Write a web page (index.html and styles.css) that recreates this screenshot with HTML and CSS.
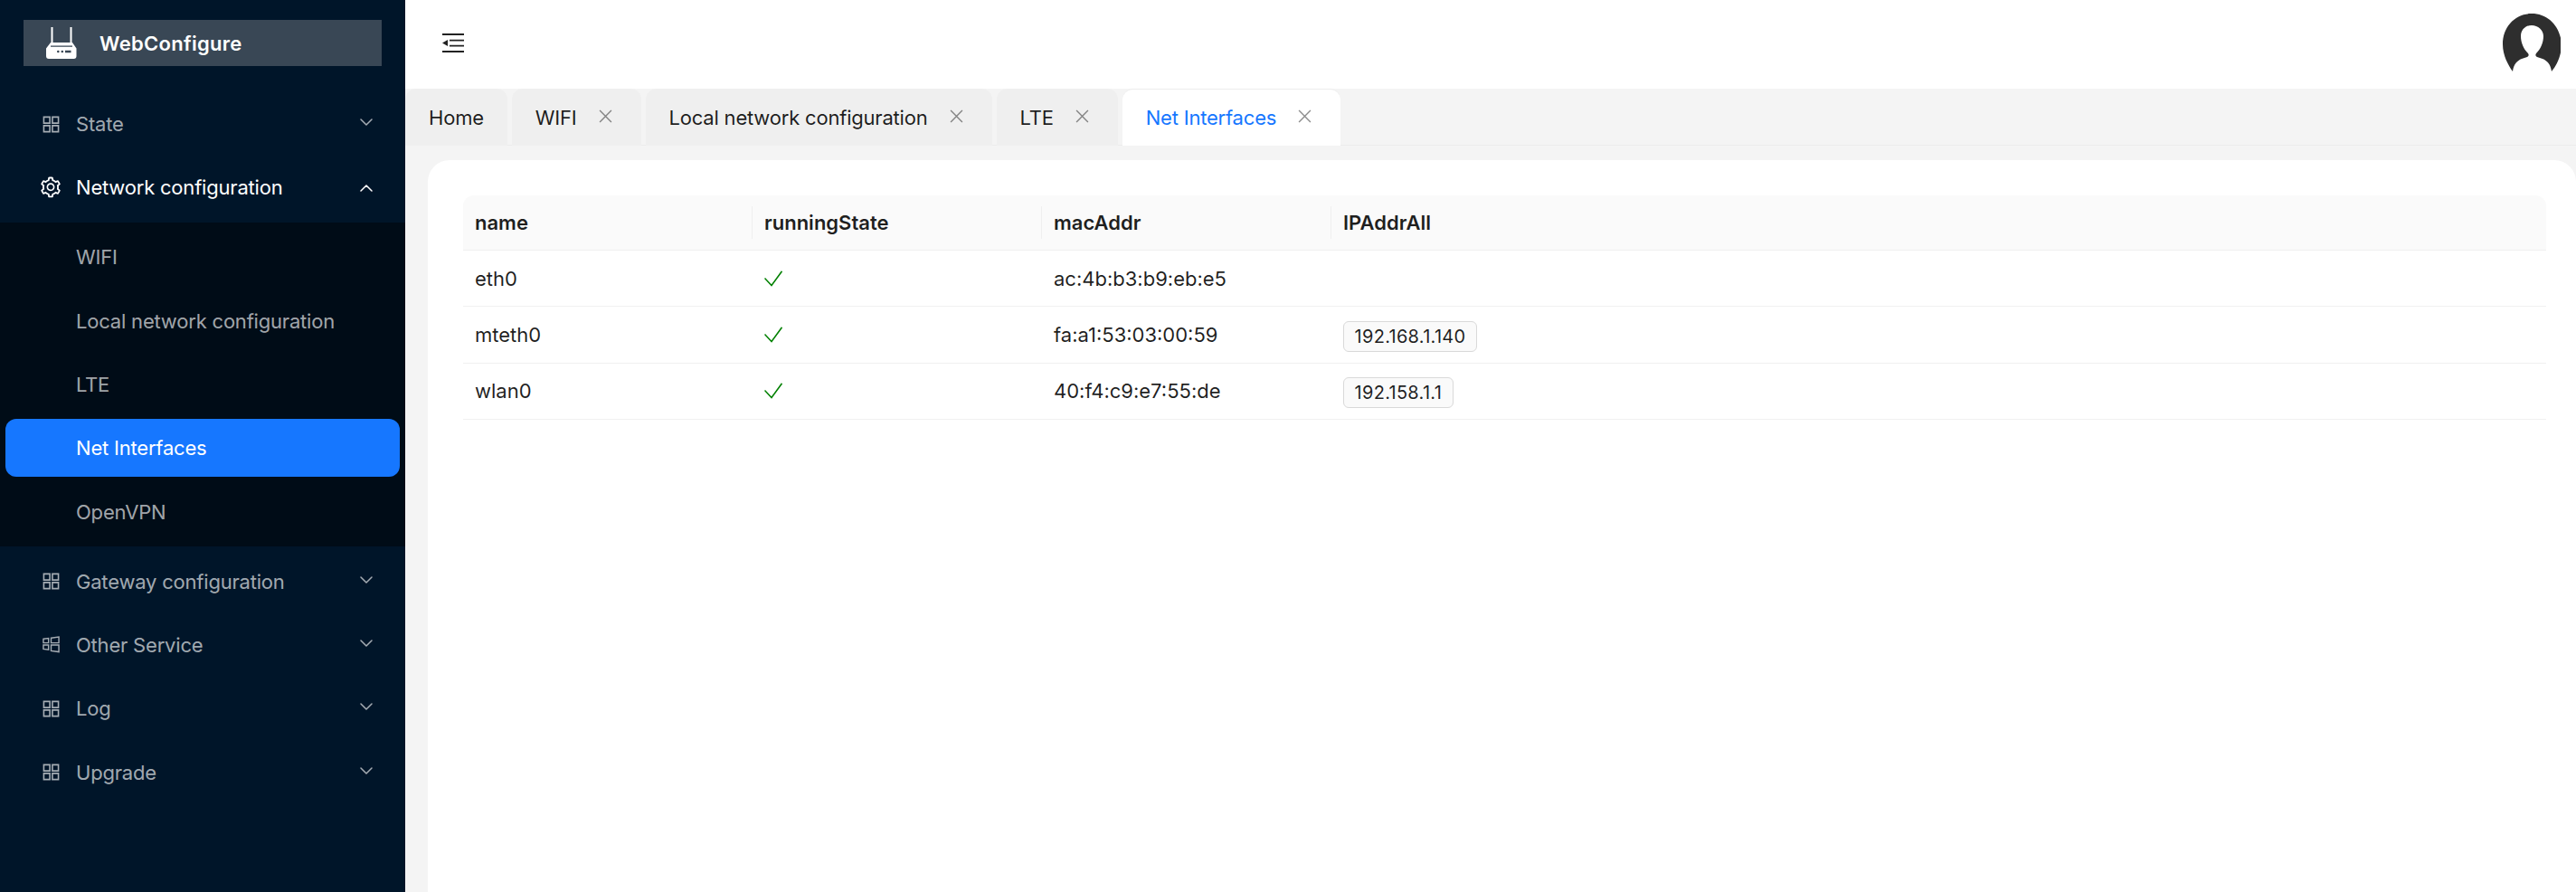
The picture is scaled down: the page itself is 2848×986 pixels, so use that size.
FILE: index.html
```html
<!DOCTYPE html>
<html lang="en">
<head>
  <meta charset="UTF-8">
  <title>WebConfigure - Net Interfaces</title>
  <link rel="stylesheet" href="styles.css">
</head>
<body>
  <svg class="sprite" xmlns="http://www.w3.org/2000/svg">
    <symbol id="icon-app" viewBox="0 0 20 20">
      <path fill="none" stroke="currentColor" stroke-width="1.7" d="M1.5 1.5h7v7h-7zM11.500 1.500h7v7h-7zM1.500 11.500h7v7h-7zM11.500 11.500h7v7h-7z"/>
    </symbol>
    <symbol id="icon-windows" viewBox="0 0 20 20">
      <path fill="none" stroke="currentColor" stroke-width="1.500" d="M1 3.500l6-.8v5.300H1zM10 2.300l9-1.300v7h-9zM1 10.500h6V16l-6-.8zM10 10.500h9v8l-9-1.300z"/>
    </symbol>
    <symbol id="icon-gear" viewBox="0 0 1024 1024">
      <path fill="currentColor" d="M924.8 625.7l-65.5-56c3.1-19 4.7-38.4 4.7-57.8s-1.6-38.8-4.7-57.8l65.5-56a32.03 32.03 0 0 0 9.3-35.2l-.9-2.6a443.74 443.74 0 0 0-79.7-137.9l-1.8-2.1a32.12 32.12 0 0 0-35.1-9.5l-81.3 28.9c-30-24.6-63.5-44-99.7-57.6l-15.7-85a32.05 32.05 0 0 0-25.8-25.7l-2.7-.5c-52.1-9.4-106.9-9.4-159 0l-2.7.5a32.05 32.05 0 0 0-25.8 25.7l-15.8 85.4a351.86 351.86 0 0 0-99 57.4l-81.9-29.1a32 32 0 0 0-35.1 9.5l-1.8 2.1a446.02 446.02 0 0 0-79.7 137.9l-.9 2.6c-4.5 12.5-.8 26.5 9.3 35.2l66.3 56.6c-3.1 18.8-4.6 38-4.6 57.1 0 19.2 1.5 38.4 4.6 57.1L99 625.5a32.03 32.03 0 0 0-9.3 35.2l.9 2.6c18.1 50.4 44.9 96.9 79.7 137.9l1.8 2.1a32.12 32.12 0 0 0 35.1 9.5l81.9-29.1c29.8 24.5 63.1 43.9 99 57.4l15.8 85.4a32.05 32.05 0 0 0 25.8 25.7l2.7.5a449.4 449.4 0 0 0 159 0l2.7-.5a32.05 32.05 0 0 0 25.8-25.7l15.7-85a350 350 0 0 0 99.7-57.6l81.3 28.9a32 32 0 0 0 35.1-9.5l1.8-2.1c34.8-41.1 61.6-87.5 79.7-137.9l.9-2.6c4.5-12.3.8-26.3-9.3-35zM788.3 465.9c2.5 15.1 3.8 30.6 3.8 46.1s-1.3 31-3.8 46.1l-6.6 40.1 74.7 63.9a370.03 370.03 0 0 1-42.6 73.6L721 702.8l-31.4 25.8c-23.9 19.6-50.5 35-79.3 45.8l-38.1 14.3-17.9 97a377.5 377.5 0 0 1-85 0l-17.9-97.2-37.8-14.5c-28.5-10.8-55-26.2-78.7-45.7l-31.4-25.9-93.4 33.2c-17-22.9-31.2-47.6-42.6-73.6l75.5-64.5-6.5-40c-2.4-14.9-3.7-30.3-3.7-45.5 0-15.3 1.2-30.6 3.7-45.5l6.5-40-75.5-64.5c11.3-26.1 25.6-50.7 42.6-73.6l93.4 33.2 31.4-25.9c23.7-19.5 50.2-34.9 78.7-45.7l37.9-14.3 17.9-97.2c28.1-3.2 56.8-3.2 85 0l17.9 97 38.1 14.3c28.7 10.8 55.4 26.2 79.3 45.8l31.4 25.8 92.8-32.9c17 22.9 31.2 47.6 42.6 73.6L781.8 426l6.5 39.9zM512 326c-97.2 0-176 78.8-176 176s78.8 176 176 176 176-78.8 176-176-78.8-176-176-176zm79.2 255.2A111.6 111.6 0 0 1 512 614c-29.9 0-58-11.7-79.2-32.8A111.6 111.6 0 0 1 400 502c0-29.9 11.7-58 32.8-79.2C454 401.6 482.1 390 512 390c29.9 0 58 11.6 79.2 32.8A111.6 111.6 0 0 1 624 502c0 29.9-11.7 58-32.8 79.2z"/>
    </symbol>
    <symbol id="icon-down" viewBox="0 0 14 8">
      <path fill="none" stroke="currentColor" stroke-width="1.500" stroke-linecap="round" stroke-linejoin="round" d="M1 1l6 6 6-6"/>
    </symbol>
    <symbol id="icon-close" viewBox="0 0 14 14">
      <path fill="none" stroke="currentColor" stroke-width="1.300" d="M1 1l12 12M13 1L1 13"/>
    </symbol>
    <symbol id="icon-check" viewBox="0 0 20 18">
      <path fill="none" stroke="#008000" stroke-width="1.500" d="M.5 8.500L8 16.500 19.500.8"/>
    </symbol>
  </svg>

  <div class="layout">
    <aside class="sidebar">
      <div class="logo">
        <svg class="logo-icon" viewBox="0 0 34 35">
          <path fill="#fff" d="M5.500 0h2v17h19V0h2v17h.5l4.500 6.500V32a3 3 0 0 1-3 3H3a3 3 0 0 1-3-3v-8.500L5 17h.5z"/>
          <path fill="#394755" d="M5 20.500h24v1.200H5zM12 27a1.300 1.300 0 1 0 2.600 0 1.300 1.300 0 1 0-2.600 0zM16.500 27a1.300 1.300 0 1 0 2.600 0 1.300 1.300 0 1 0-2.600 0zM21 25.700h6.500v2.600H21z"/>
        </svg>
        <span class="logo-text">WebConfigure</span>
      </div>
      <nav class="menu">
        <div class="menu-item">
          <svg class="menu-icon"><use href="#icon-app"/></svg>
          <span class="menu-label">State</span>
          <svg class="arrow"><use href="#icon-down"/></svg>
        </div>
        <div class="menu-item open">
          <svg class="menu-icon gear"><use href="#icon-gear"/></svg>
          <span class="menu-label">Network configuration</span>
          <svg class="arrow up"><use href="#icon-down"/></svg>
        </div>
        <div class="submenu">
          <div class="menu-item sub">WIFI</div>
          <div class="menu-item sub">Local network configuration</div>
          <div class="menu-item sub">LTE</div>
          <div class="menu-item sub selected">Net Interfaces</div>
          <div class="menu-item sub">OpenVPN</div>
        </div>
        <div class="menu-item">
          <svg class="menu-icon"><use href="#icon-app"/></svg>
          <span class="menu-label">Gateway configuration</span>
          <svg class="arrow"><use href="#icon-down"/></svg>
        </div>
        <div class="menu-item">
          <svg class="menu-icon"><use href="#icon-windows"/></svg>
          <span class="menu-label">Other Service</span>
          <svg class="arrow"><use href="#icon-down"/></svg>
        </div>
        <div class="menu-item">
          <svg class="menu-icon"><use href="#icon-app"/></svg>
          <span class="menu-label">Log</span>
          <svg class="arrow"><use href="#icon-down"/></svg>
        </div>
        <div class="menu-item">
          <svg class="menu-icon"><use href="#icon-app"/></svg>
          <span class="menu-label">Upgrade</span>
          <svg class="arrow"><use href="#icon-down"/></svg>
        </div>
      </nav>
    </aside>

    <main class="main">
      <header class="topbar">
        <svg class="trigger" viewBox="0 0 24 21">
          <path fill="#222" d="M0 0h24v2H0zM8 6.800h16v1.800H8zM8 12.800h16v1.800H8zM0 19h24v2H0zM0 10.500L6 7v7z"/>
        </svg>
        <svg class="avatar" viewBox="0 0 64 64">
          <path fill="#2e2e2e" d="M32 0C14 0 0 14 0 34c0 12 6 23 11 30 1-8 5-12 10-14l6-2c2-1 2-2.500 1-4-5-5-8-12-8-19 0-7 5-12 12-12s13 5 13 12c0 7-3 14-8 19-1 1.500-1 3 1 4l6 2c5 2 9 6 10 14 6-7 11-18 11-30C64 14 50 0 32 0z"/>
        </svg>
      </header>

      <div class="tabs">
        <div class="tab">Home</div>
        <div class="tab closable">WIFI<svg class="tab-close"><use href="#icon-close"/></svg></div>
        <div class="tab closable">Local network configuration<svg class="tab-close"><use href="#icon-close"/></svg></div>
        <div class="tab closable">LTE<svg class="tab-close"><use href="#icon-close"/></svg></div>
        <div class="tab closable active">Net Interfaces<svg class="tab-close"><use href="#icon-close"/></svg></div>
      </div>

      <section class="content">
        <table class="data-table">
          <thead>
            <tr>
              <th>name</th>
              <th>runningState</th>
              <th>macAddr</th>
              <th>IPAddrAll</th>
            </tr>
          </thead>
          <tbody>
            <tr>
              <td>eth0</td>
              <td><svg class="check"><use href="#icon-check"/></svg></td>
              <td>ac:4b:b3:b9:eb:e5</td>
              <td></td>
            </tr>
            <tr>
              <td>mteth0</td>
              <td><svg class="check"><use href="#icon-check"/></svg></td>
              <td>fa:a1:53:03:00:59</td>
              <td><span class="tag">192.168.1.140</span></td>
            </tr>
            <tr>
              <td>wlan0</td>
              <td><svg class="check"><use href="#icon-check"/></svg></td>
              <td>40:f4:c9:e7:55:de</td>
              <td><span class="tag">192.158.1.1</span></td>
            </tr>
          </tbody>
        </table>
      </section>
    </main>
  </div>
</body>
</html>
```

FILE: styles.css
```css
* {
  box-sizing: border-box;
}
html, body {
  height: 100%;
}
body {
  margin: 0;
  font-family: Inter, "Noto Sans", sans-serif;
  font-size: 22px;
  color: rgba(0,0,0,0.88);
  background: #f4f4f4;
  overflow: hidden;
}
.sprite {
  display: none;
}
.layout {
  display: flex;
  height: 100%;
}

/* sidebar */
.sidebar {
  width: 448px;
  flex-shrink: 0;
  background: #001529;
  color: rgba(255,255,255,0.65);
  letter-spacing: -0.2px;
}
.logo {
  display: flex;
  align-items: center;
  height: 51px;
  margin: 22px 26px 32px;
  padding-left: 25px;
  background: #394755;
}
.logo-icon {
  width: 34px;
  height: 35px;
}
.logo-text {
  margin-left: 25px;
  color: #fff;
  font-weight: 600;
  letter-spacing: 0.3px;
}
.menu-item {
  display: flex;
  align-items: center;
  height: 64px;
  margin: 0 6px 6.400px;
  padding-left: 41px;
  padding-right: 30px;
  border-radius: 12px;
}
.menu-item.open {
  color: #fff;
}
.menu-icon {
  width: 19px;
  height: 19px;
  margin-right: 18px;
  flex-shrink: 0;
}
.menu-icon.gear {
  width: 26px;
  height: 26px;
  margin-left: -4px;
  margin-right: 15px;
}
.menu-label {
  flex: 1;
}
.arrow {
  width: 14px;
  height: 8px;
  margin-top: -4px;
}
.arrow.up {
  margin-top: 2px;
  transform: rotate(180deg);
}
.submenu {
  display: flow-root;
  padding-top: 6.400px;
  margin-bottom: 6.400px;
  background: #000c17;
}
.menu-item.sub {
  padding-left: 78px;
}
.menu-item.selected {
  background: #1677ff;
  color: #fff;
}

/* top bar */
.main {
  flex: 1;
  display: flex;
  flex-direction: column;
  min-width: 0;
}
.topbar {
  display: flex;
  align-items: center;
  justify-content: space-between;
  height: 98px;
  padding: 0 17px 0 41px;
  background: #fff;
}
.trigger {
  width: 24px;
  height: 21px;
  margin-bottom: 3px;
}
.avatar {
  width: 64px;
  height: 64px;
  margin-bottom: 4px;
}

/* tabs */
.tabs {
  display: flex;
  gap: 5px;
  height: 63px;
  border-bottom: 1px solid #ececec;
  letter-spacing: -0.2px;
}
.tab {
  display: flex;
  align-items: center;
  height: 63px;
  padding: 0 26px;
  background: #efefef;
  border-radius: 12px 12px 0 0;
  white-space: nowrap;
}
.tab.closable {
  padding-right: 32px;
}
.tab.active {
  background: #fff;
  color: #1677ff;
  border-top: 1px solid #ececec;
}
.tab-close {
  width: 15px;
  height: 15px;
  margin: -3px 0 0 24px;
  color: rgba(0,0,0,0.45);
}

/* table */
.content {
  flex: 1;
  margin: 16px 0 0 25px;
  padding: 39px 33px 0 39px;
  background: #fff;
  border-radius: 24px 24px 0 0;
}
.data-table {
  width: 100%;
  border-collapse: separate;
  border-spacing: 0;
  table-layout: fixed;
}
.data-table th:nth-child(-n+3) {
  width: 320px;
}
.data-table th {
  position: relative;
  height: 61px;
  padding: 0 13px;
  background: #fafafa;
  border-bottom: 1px solid #f0f0f0;
  font-weight: 600;
  text-align: left;
}
.data-table th:first-child {
  border-top-left-radius: 12px;
}
.data-table th:last-child {
  border-top-right-radius: 12px;
}
.data-table th:not(:last-child)::after {
  content: "";
  position: absolute;
  top: 12px;
  bottom: 12px;
  right: 0;
  width: 1px;
  background: #efefef;
}
.data-table td {
  height: 62.400px;
  padding: 0 13px;
  border-bottom: 1px solid #f0f0f0;
}
.check {
  display: block;
  width: 20px;
  height: 18px;
}
.tag {
  display: inline-block;
  height: 34px;
  margin-top: 3px;
  padding: 0 11.500px;
  line-height: 32px;
  font-size: 20px;
  letter-spacing: 0.3px;
  background: #fafafa;
  border: 1px solid #d9d9d9;
  border-radius: 6px;
  vertical-align: middle;
}
```
